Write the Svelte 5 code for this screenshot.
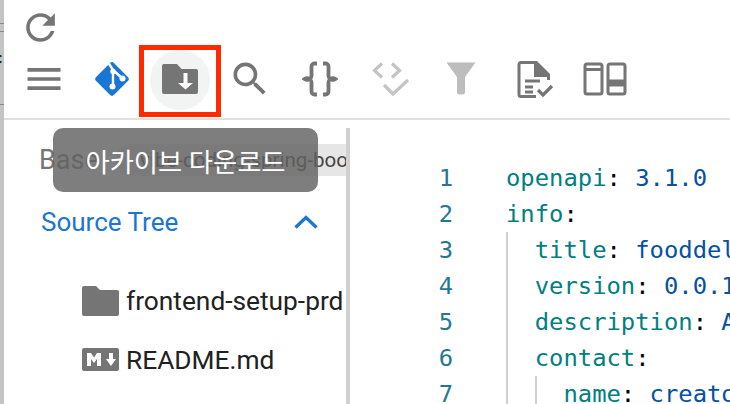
<script>
  const lines = [
    { n: 1, depth: 0, key: 'openapi', val: '3.1.0', cls: 'num' },
    { n: 2, depth: 0, key: 'info', val: '', cls: '' },
    { n: 3, depth: 1, key: 'title', val: 'fooddelivery', cls: 'str' },
    { n: 4, depth: 1, key: 'version', val: '0.0.1', cls: 'num' },
    { n: 5, depth: 1, key: 'description', val: 'API', cls: 'str' },
    { n: 6, depth: 1, key: 'contact', val: '', cls: '' },
    { n: 7, depth: 2, key: 'name', val: 'creator', cls: 'str' }
  ];
</script>

<div class="root">
  <div class="strip"><span class="clip-f">f</span></div>
  <div class="main">
    <header class="head">
      <div class="reload-row">
        <svg class="reload" viewBox="0 0 24 24" width="43" height="43"><path fill="#757575" d="M17.65 6.35A7.958 7.958 0 0 0 12 4c-4.42 0-7.99 3.58-7.99 8s3.57 8 7.99 8c3.73 0 6.84-2.55 7.73-6h-2.08A5.99 5.99 0 0 1 12 18c-3.31 0-6-2.69-6-6s2.69-6 6-6c1.66 0 3.14.69 4.22 1.78L13 11h7V4l-2.35 2.35z"/></svg>
      </div>
      <div class="tools">
        <button class="tool tight" aria-label="menu"><svg viewBox="0 0 24 24" width="44" height="44"><path fill="#757575" d="M3 18h18v-2H3v2zm0-5h18v-2H3v2zm0-7v2h18V6H3z"/></svg></button>
        <button class="tool tight" aria-label="git"><svg viewBox="0 0 40 40" width="40" height="40"><rect x="7.300" y="7.300" width="25.400" height="25.400" rx="3" transform="rotate(45 20 20)" fill="#1976d2"/><path d="M15.500 2.500 L21 11 M21 11 V28 M21 11 L30 19" stroke="#fff" stroke-width="2.400" fill="none"/><circle cx="21" cy="12.500" r="2.700" fill="#fff"/><circle cx="20.500" cy="27.500" r="3" fill="#fff"/><circle cx="30.500" cy="19.500" r="3" fill="#fff"/></svg></button>
        <button class="tool active" aria-label="archive"><svg viewBox="0 0 40 40" width="40" height="40"><path fill="#757575" d="M4 5h13l4.500 5H36a2 2 0 0 1 2 2v21a2 2 0 0 1-2 2H4a2 2 0 0 1-2-2V7a2 2 0 0 1 2-2z"/><path fill="#fff" d="M23.500 14h4v10h5.500l-7.500 6.500-7.500-6.500h5.500z"/></svg></button>
        <button class="tool" aria-label="search"><svg viewBox="0 0 24 24" width="44" height="44"><path fill="#757575" d="M15.500 14h-.79l-.28-.27A6.470 6.470 0 0 0 16 9.500 6.500 6.500 0 1 0 9.500 16c1.610 0 3.090-.59 4.230-1.570l.27.28v.79l5 4.990L20.490 19l-4.990-5zm-6 0C7.010 14 5 11.990 5 9.500S7.010 5 9.500 5 14 7.010 14 9.500 11.990 14 9.500 14z"/></svg></button>
        <button class="tool" aria-label="json"><svg viewBox="0 0 36 36" width="36" height="36" fill="none" stroke="#757575" stroke-width="3.800"><path d="M15 2.500h-2.500a3 3 0 0 0-3 3v8a4.500 4.500 0 0 1-7 4.500 4.500 4.500 0 0 1 7 4.500v8a3 3 0 0 0 3 3H15"/><path d="M21 2.500h2.500a3 3 0 0 1 3 3v8a4.500 4.500 0 0 0 7 4.500 4.500 4.500 0 0 0-7 4.500v8a3 3 0 0 1-3 3H21"/></svg></button>
        <button class="tool" aria-label="validate"><svg viewBox="0 0 40 40" width="40" height="40" fill="none" stroke="#c4c4c4" stroke-width="3.200"><path d="M12 4.500 L4.500 11.500 L12 18.500"/><path d="M22 4.500 L29.500 11.500 L22 18.500"/><path d="M14 26 L23 35 L38 21"/></svg></button>
        <button class="tool filter" aria-label="filter"><svg viewBox="0 0 40 40" width="40" height="40"><path fill="#bdbdbd" d="M5.500 3.500h29L24 18v15a2.500 2.500 0 0 1-2.500 2.500h-3A2.500 2.500 0 0 1 16 33V18z"/></svg></button>
        <button class="tool report" aria-label="report"><svg viewBox="0 0 40 40" width="40" height="40" fill="none"><path d="M21 3.500H6a2 2 0 0 0-2 2v30a2 2 0 0 0 2 2h15" stroke="#757575" stroke-width="3"/><path fill="#757575" d="M19 2h3l13 13v6h-3v-3H19z"/><path d="M10 22h15M10 28h8M10 33h8" stroke="#757575" stroke-width="3"/><path d="M23 31l5 5 9-9" stroke="#757575" stroke-width="3.200"/></svg></button>
        <button class="tool" aria-label="layout"><svg viewBox="0 0 44 34" width="44" height="34" fill="none" stroke="#757575" stroke-width="3"><rect x="2" y="2" width="17" height="30" rx="2"/><path d="M2 7.500h17"/><rect x="25" y="2" width="17" height="30" rx="2"/><path d="M25 21h17" stroke-width="7"/></svg></button>
      </div>
      <div class="redbox"></div>
    </header>
    <div class="body">
      <aside class="side">
        <div class="base"><span class="base-label">Base</span><span class="chip">vibe-coding-spring-boot</span></div>
        <div class="tree-head"><span>Source Tree</span><svg viewBox="0 0 24 14" width="24" height="14" fill="none" stroke="#1976d2" stroke-width="3.200"><path d="M1.500 12.500 L12 2.500 L22.500 12.500"/></svg></div>
        <ul class="tree">
          <li><svg viewBox="0 0 37 30" width="37" height="30"><path fill="#757575" d="M2 0h12l4 4h17a2 2 0 0 1 2 2v22a2 2 0 0 1-2 2H2a2 2 0 0 1-2-2V2a2 2 0 0 1 2-2z"/></svg><span>frontend-setup-prd</span></li>
          <li><svg viewBox="0 0 37 23" width="37" height="23"><rect width="37" height="23" rx="2" fill="#757575"/><path fill="#fff" d="M5 18V5h4l3 4.500L15 5h4v13h-4v-7l-3 4-3-4v7zM27 5h4v6h3l-5 7-5-7h3z"/></svg><span>README.md</span></li>
        </ul>
        <div class="tip">아카이브 다운로드</div>
      </aside>
      <div class="rule"></div>
      <section class="code">
        {#each lines as l}
          <div class="ln">
            <span class="no">{l.n}</span>
            <span class="txt">{#each Array(l.depth) as _}<span class="ind">{'  '}</span>{/each}<span class="k">{l.key}</span><span class="c">:</span>{#if l.val}{' '}<span class={l.cls}>{l.val}</span>{/if}</span>
          </div>
        {/each}
      </section>
    </div>
  </div>
</div>

<style>
  :global(body) { margin: 0; background: #fff; }
  .root { width: 730px; height: 404px; display: flex; overflow: hidden; background: #fff; font-family: Roboto, "Noto Sans CJK KR", sans-serif; }
  .strip { width: 4px; flex: none; position: relative; overflow: hidden; background: linear-gradient(#c4c4c4 23px, #8a8a8a 23px, #8a8a8a 24px, #c4c4c4 24px, #c4c4c4 31px, #8a8a8a 31px, #8a8a8a 32px, #c4c4c4 32px, #c4c4c4 104px, #8a8a8a 104px, #8a8a8a 105px, #c4c4c4 105px); }
  .clip-f { position: absolute; left: -7px; top: 49px; font: 30px/36px "Liberation Sans", sans-serif; color: #222; }
  .main { flex: 1; min-width: 0; display: flex; flex-direction: column; }
  .head { height: 120px; box-sizing: border-box; border-bottom: 2px solid #e0e0e0; flex: none; position: relative; }
  .reload-row { height: 50px; box-sizing: border-box; padding: 4px 0 0 15px; display: flex; align-items: center; }
  .tools { display: flex; gap: 10px; padding-left: 10px; }
  .tool { width: 60px; height: 60px; padding: 0 0 3px; flex: none; box-sizing: border-box; border: 0; background: none; border-radius: 50%; display: flex; align-items: center; justify-content: center; }
  .tight { margin-right: -2px; }
  .filter { margin-left: 1px; }
  .report { margin-left: 4px; }
  .tool.active { background: #f2f3f3; }
  .redbox { position: absolute; left: 135px; top: 45px; width: 82px; height: 72px; box-sizing: border-box; border: 5px solid #ff2a00; }
  .body { flex: 1; min-height: 0; display: flex; }
  .side { width: 342px; flex: none; box-sizing: border-box; padding: 20px 28px 0 35px; position: relative; overflow: hidden; }
  .base { display: flex; align-items: center; height: 40px; margin-right: -28px; white-space: nowrap; }
  .base-label { font-size: 27px; color: #757575; width: 76px; flex: none; }
  .chip { background: #e6e6e6; font-size: 20.500px; color: #444; padding: 0 0 0 25px; height: 32px; line-height: 32px; flex: 1; overflow: hidden; border-radius: 16px 0 0 16px; }
  .tree-head { height: 44px; margin-top: 20px; margin-left: 2px; display: flex; justify-content: space-between; align-items: center; color: #1976d2; font-size: 26px; }
  .tree { list-style: none; margin: 27px -28px 0 43px; padding: 0; }
  .tree li { height: 59px; display: flex; align-items: center; gap: 7px; font-size: 26.300px; color: #212121; white-space: nowrap; }
  .tip { position: absolute; left: 49px; top: 8px; width: 265px; height: 64px; box-sizing: border-box; border-radius: 10px; background: rgba(97,97,97,.82); color: #fff; font-size: 26.300px; display: flex; align-items: center; justify-content: center; }
  .rule { width: 4px; flex: none; background: #d0d0d0; margin-top: 8px; }
  .code { flex: 1; min-width: 0; overflow: hidden; padding-top: 40px; font: 23.850px/36px "DejaVu Sans Mono", monospace; white-space: pre; }
  .ln { display: flex; height: 36px; }
  .no { width: 103px; flex: none; text-align: right; color: #237893; }
  .txt { margin-left: 53px; }
  .ind { display: inline-block; box-shadow: inset 2px 0 0 #d0d0d0; }
  .k { color: #008080; }
  .c { color: #000; }
  .num { color: #0451a5; }
  .str { color: #0451a5; }
</style>
